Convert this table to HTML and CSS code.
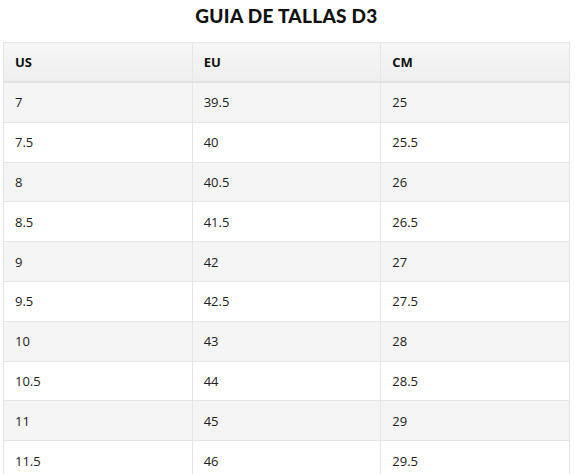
FILE: index.html
```html
<!DOCTYPE html>
<html lang="es">
<head>
<meta charset="utf-8">
<link rel="stylesheet" href="styles.css">
</head>
<body>
<div class="page">
  <h2 class="title">GUIA DE TALLAS D3</h2>
  <table class="sizes">
    <thead>
      <tr><th>US</th><th>EU</th><th>CM</th></tr>
    </thead>
    <tbody>
      <tr><td>7</td><td>39.5</td><td>25</td></tr>
      <tr><td>7.5</td><td>40</td><td>25.5</td></tr>
      <tr><td>8</td><td>40.5</td><td>26</td></tr>
      <tr><td>8.5</td><td>41.5</td><td>26.5</td></tr>
      <tr><td>9</td><td>42</td><td>27</td></tr>
      <tr><td>9.5</td><td>42.5</td><td>27.5</td></tr>
      <tr><td>10</td><td>43</td><td>28</td></tr>
      <tr><td>10.5</td><td>44</td><td>28.5</td></tr>
      <tr><td>11</td><td>45</td><td>29</td></tr>
      <tr><td>11.5</td><td>46</td><td>29.5</td></tr>
    </tbody>
  </table>
</div>
</body>
</html>
```
FILE: styles.css
```css
html, body {
  margin: 0;
  padding: 0;
  background: #ffffff;
}
.page {
  padding: 0 5px 0 3px;
  font-family: "Open Sans", "Noto Sans", sans-serif;
  color: #222;
}
.title {
  margin: 0;
  height: 42px;
  line-height: 31px;
  text-align: center;
  font-family: Lato, "Open Sans", sans-serif;
  font-weight: 900;
  font-size: 19px;
  color: #111;
  letter-spacing: 0.3px;
}
.sizes {
  width: 567px;
  border-collapse: collapse;
  table-layout: fixed;
  font-size: 13px;
}
.sizes th, .sizes td {
  border: 1px solid #e6e6e6;
  text-align: left;
  padding: 0 12px 0 11px;
  height: 38.8px;
}
.sizes th {
  height: 38px;
  font-weight: 700;
  color: #111;
  background: linear-gradient(#f7f7f7, #eeeeee);
  border-bottom: 2px solid #e2e2e2;
}
.sizes tbody tr:nth-child(odd) td {
  background: #f5f5f5;
}
.sizes tbody tr:nth-child(even) td {
  background: #ffffff;
}
```
